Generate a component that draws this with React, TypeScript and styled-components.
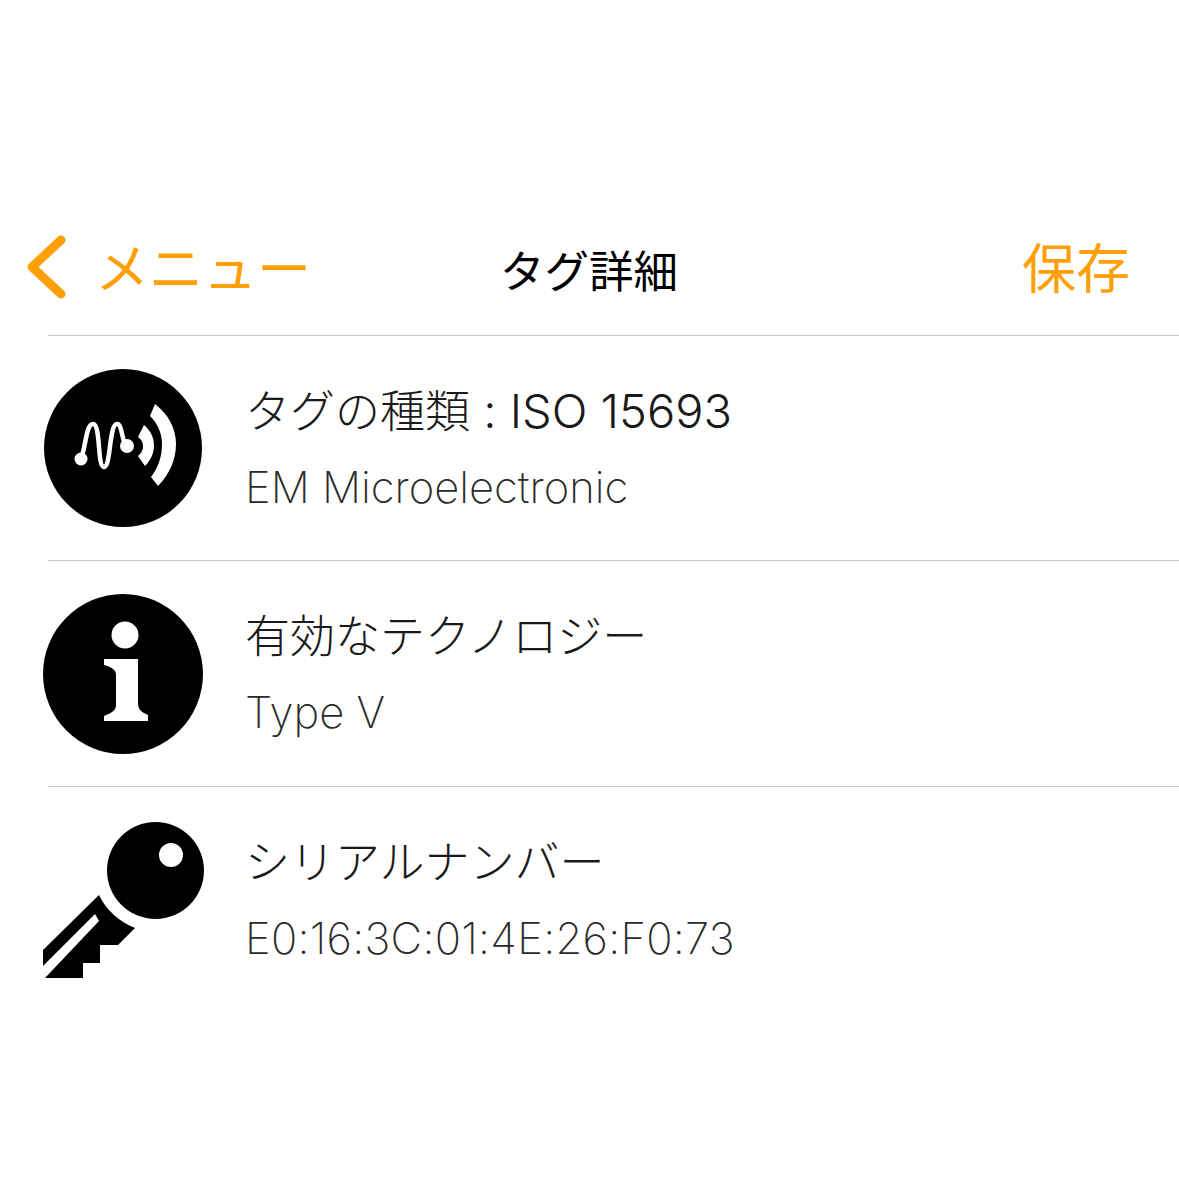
import React, { FC, ReactNode } from "react";
import styled, { createGlobalStyle } from "styled-components";

const GlobalStyle = createGlobalStyle`
  html, body {
    margin: 0;
    padding: 0;
    background: #ffffff;
  }
  body {
    font-family: "Inter", "Noto Sans CJK JP", sans-serif;
    color: #111111;
  }
`;

const Screen = styled.main`
  width: 1179px;
  height: 1179px;
  padding-top: 222px;
  box-sizing: border-box;
  overflow: hidden;
`;

const NavBar = styled.header`
  height: 112.8px;
  box-sizing: border-box;
  display: grid;
  grid-template-columns: 474px auto 1fr;
  align-items: center;
  padding: 0 49px 26px 26px;
`;

const BackLink = styled.div`
  display: flex;
  align-items: center;
  gap: 29px;
  color: #ff9f0a;
  font-size: 54px;
  font-weight: 400;
`;

const NavTitle = styled.h1`
  margin: 6px 0 0;
  font-size: 44.5px;
  font-weight: 400;
  color: #000000;
`;

const SaveLink = styled.div`
  justify-self: end;
  color: #ff9f0a;
  font-size: 54px;
  font-weight: 400;
`;

const Row = styled.section`
  height: 225.5px;
  box-sizing: border-box;
  margin-left: 48px;
  border-top: 1px solid #c8c8c8;
  display: flex;
  align-items: center;
  gap: 47px;
`;

const IconSlot = styled.div`
  width: 155px;
  height: 160px;
  margin-left: -5px;
  flex: none;
  svg {
    display: block;
    width: 160px;
    height: 160px;
    overflow: visible;
  }
`;

const RowText = styled.div`
  display: flex;
  flex-direction: column;
  gap: 15px;
  padding-top: 2px;
`;

const RowTitle = styled.div`
  font-size: 45px;
  font-weight: 300;
  line-height: 60px;
  color: #1a1a1a;
`;

const LatinPart = styled.span`
  font-size: 47px;
`;

const RowDetail = styled.div<{ $tracking?: number }>`
  font-size: 43.5px;
  font-weight: 200;
  line-height: 60px;
  color: #2a2a2a;
  letter-spacing: ${(p) => p.$tracking ?? 0}px;
`;

const BackChevron: FC = () => (
  <svg width="40" height="68" viewBox="0 0 40 68" fill="none">
    <path d="M35 9 L6 36 L35 63" stroke="#ff9f0a" strokeWidth="9" strokeLinecap="round" strokeLinejoin="round" />
  </svg>
);

const NfcIcon: FC = () => (
  <svg viewBox="0 0 160 160">
    <circle cx="80" cy="80" r="79" fill="#000" />
    <path
      d="M38 91 C43 78 43 56 50 56 C58 56 54 99 61 99 C68 99 66 56 74 56 C80 56 78 76 85 78"
      fill="none"
      stroke="#fff"
      strokeWidth="4.5"
    />
    <circle cx="38" cy="91" r="6.5" fill="#fff" />
    <circle cx="84" cy="78" r="7" fill="#fff" />
    <path d="M101 57 C108 63 111 70 111 77 C111 85 108 92 102 98 L95 88 C99 85 100 81 100 78 C100 75 99 72 95 69 Z" fill="#fff" />
    <path d="M112 36 C125 46 133 60 133 76 C133 92 126 107 115 118 L108 109 C115 100 119 89 119 76 C119 66 115 56 107 48 Z" fill="#fff" />
  </svg>
);

const InfoIcon: FC = () => (
  <svg viewBox="0 0 160 160">
    <circle cx="80" cy="80" r="80" fill="#000" />
    <circle cx="82" cy="41" r="13.5" fill="#fff" />
    <path
      d="M61 65 H95 V109 C95 115 98 118 105 121 V127 H61 V122 C69 119 73 116 73 111 V81 C73 76 69 73 61 71 Z"
      fill="#fff"
    />
  </svg>
);

const KeyIcon: FC = () => (
  <svg viewBox="0 0 160 160">
    <path
      fillRule="evenodd"
      d="M112.5 3 A48.5 48.5 0 0 1 112.5 100 A48.5 48.5 0 0 1 112.5 3 Z M128 24 A12 12 0 0 0 128 48 A12 12 0 0 0 128 24 Z"
      fill="#000"
    />
    <path
      d="M0 131 L56 76 C63 91 77 103 92 109 L75 126 H57 V144 H40 V159 H2 L56 102 L52 95 L0 147 Z"
      fill="#000"
    />
  </svg>
);

type ItemProps = {
  icon: ReactNode;
  title: ReactNode;
  detail: string;
  tracking?: number;
};

const Item: FC<ItemProps> = ({ icon, title, detail, tracking }) => (
  <Row>
    <IconSlot>{icon}</IconSlot>
    <RowText>
      <RowTitle>{title}</RowTitle>
      <RowDetail $tracking={tracking}>{detail}</RowDetail>
    </RowText>
  </Row>
);

const App: FC = () => {
  return (
    <Screen>
      <GlobalStyle />
      <NavBar>
        <BackLink>
          <BackChevron />
          メニュー
        </BackLink>
        <NavTitle>タグ詳細</NavTitle>
        <SaveLink>保存</SaveLink>
      </NavBar>
      <Item
        icon={<NfcIcon />}
        title={
          <>
            タグの種類<LatinPart> : ISO 15693</LatinPart>
          </>
        }
        detail="EM Microelectronic"
      />
      <Item icon={<InfoIcon />} title="有効なテクノロジー" detail="Type V" />
      <Item icon={<KeyIcon />} title="シリアルナンバー" detail="E0:16:3C:01:4E:26:F0:73" tracking={0.27} />
    </Screen>
  );
};

export default App;
